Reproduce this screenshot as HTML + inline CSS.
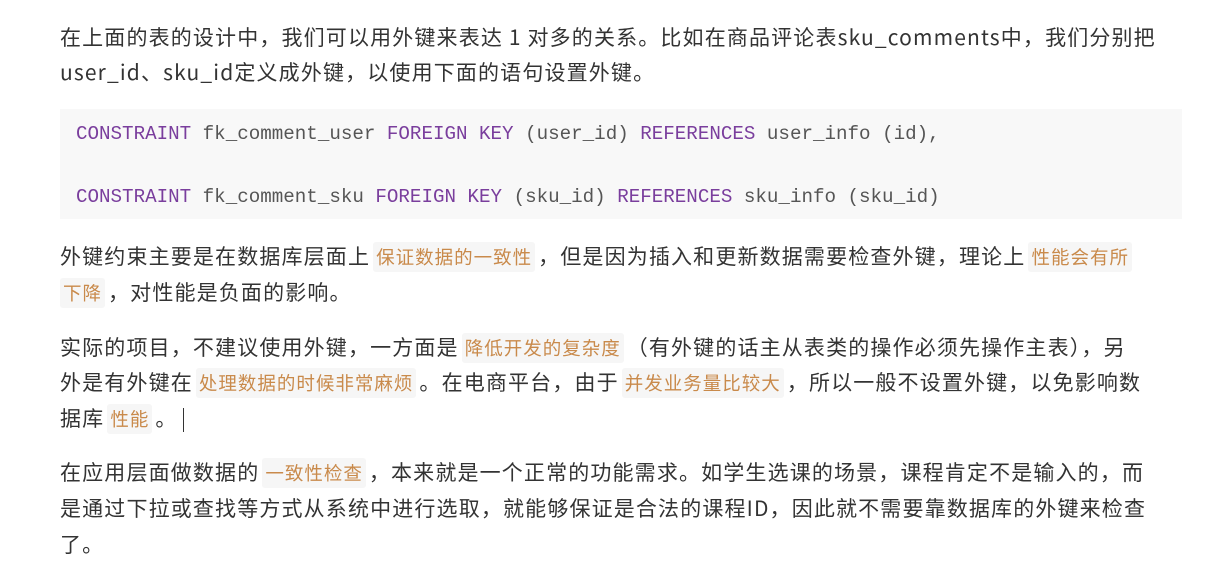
<!DOCTYPE html>
<html><head><meta charset="utf-8"><style>
body{margin:0;width:1210px;height:566px;background:#fff;overflow:hidden;font-family:"Noto Sans CJK SC","Liberation Sans",sans-serif;color:#333;}
.l{position:absolute;left:60px;font-size:21px;line-height:32px;white-space:nowrap;letter-spacing:1.15px;}
.c{background:#f6f6f6;color:#c98a4b;font-size:18.5px;padding:2px 3px;margin:0 3px;border-radius:3px;letter-spacing:1px;}
.code{position:absolute;left:60px;top:109px;width:1122px;height:110px;background:#f8f8f8;}
.cl{position:absolute;left:16px;font-family:"Liberation Mono",monospace;font-size:19.2px;color:#555;white-space:nowrap;}
.k{color:#7a3e9d;}
</style></head><body>
<div class="l" style="top:21px">在上面的表的设计中，我们可以用外键来表达 1 对多的关系。比如在商品评论表sku_comments中，我们分别把</div>
<div class="l" style="top:56px">user_id、sku_id定义成外键，以使用下面的语句设置外键。</div>
<div class="code">
<div class="cl" style="top:14px"><span class="k">CONSTRAINT</span> fk_comment_user <span class="k">FOREIGN KEY</span> (user_id) <span class="k">REFERENCES</span> user_info (id),</div>
<div class="cl" style="top:77px"><span class="k">CONSTRAINT</span> fk_comment_sku <span class="k">FOREIGN KEY</span> (sku_id) <span class="k">REFERENCES</span> sku_info (sku_id)</div>
</div>
<div class="l" style="top:240px">外键约束主要是在数据库层面上<span class="c">保证数据的一致性</span>，但是因为插入和更新数据需要检查外键，理论上<span class="c">性能会有所</span></div>
<div class="l" style="top:276px;left:57px"><span class="c">下降</span>，对性能是负面的影响。</div>
<div class="l" style="top:331px">实际的项目，不建议使用外键，一方面是<span class="c">降低开发的复杂度</span>（有外键的话主从表类的操作必须先操作主表），另</div>
<div class="l" style="top:366px">外是有外键在<span class="c">处理数据的时候非常麻烦</span>。在电商平台，由于<span class="c">并发业务量比较大</span>，所以一般不设置外键，以免影响数</div>
<div class="l" style="top:402px">据库<span class="c">性能</span>。<span style="display:inline-block;width:1px;height:24px;background:#333;vertical-align:middle;margin-left:6px"></span></div>
<div class="l" style="top:456px">在应用层面做数据的<span class="c">一致性检查</span>，本来就是一个正常的功能需求。如学生选课的场景，课程肯定不是输入的，而</div>
<div class="l" style="top:492px">是通过下拉或查找等方式从系统中进行选取，就能够保证是合法的课程ID，因此就不需要靠数据库的外键来检查</div>
<div class="l" style="top:528px">了。</div>
</body></html>
